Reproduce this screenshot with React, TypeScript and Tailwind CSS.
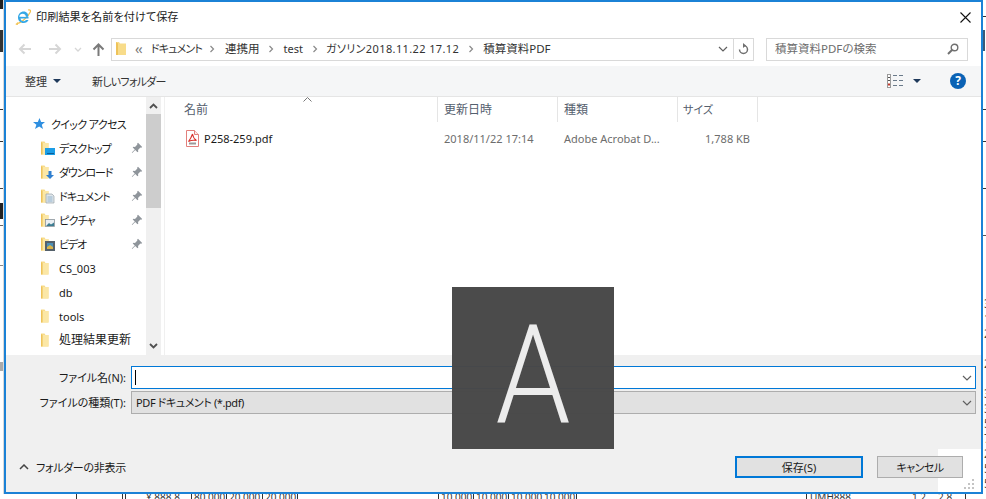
import React from "react";

const Folder = ({ className = "", children }: { className?: string; children?: React.ReactNode }) => (
  <svg width="16" height="16" viewBox="0 0 16 16" className={`shrink-0 ${className}`}>
    <path d="M1 1.500h3.500l1 1.500H8.500V14.500H1z" fill="#f8dc8a" />
    <path d="M2.500 3H8.500V14.500H2.500z" fill="#fbe7a6" />
    <path d="M1 2v12.500h1.500V3z" fill="#eec35a" />
    {children}
  </svg>
);

const Pin = () => (
  <svg width="12" height="12" viewBox="0 0 12 12" className="ml-auto mr-[3px] shrink-0">
    <path d="M7 0.800l4.200 4.200-1 .7-.8-.3L7 8l.3 1.500-.8.8L4.200 8 1.200 11l-.4-.4 3-3L1.700 5.500l.8-.8L4 5l2.400-2.400-.3-.8z" fill="#8f959b" />
  </svg>
);

const navItems: { label: string; kind: string; pin?: boolean; cls?: string }[] = [
  { label: "デスクトップ", kind: "desktop", pin: true, cls: "tracking-[-0.9px]" },
  { label: "ダウンロード", kind: "download", pin: true, cls: "tracking-[-1.1px]" },
  { label: "ドキュメント", kind: "docs", pin: true, cls: "tracking-[-0.9px]" },
  { label: "ピクチャ", kind: "pics", pin: true, cls: "tracking-[-0.75px]" },
  { label: "ビデオ", kind: "video", pin: true, cls: "tracking-[-1.2px]" },
  { label: "CS_003", kind: "" },
  { label: "db", kind: "" },
  { label: "tools", kind: "" },
  { label: "処理結果更新", kind: "", cls: "text-[12px]" },
];

const Overlay = ({ kind }: { kind: string }) => {
  if (kind === "desktop")
    return (
      <>
        <rect x="5" y="8" width="10" height="7" fill="#1b9de6" />
        <rect x="7" y="13" width="7" height="1" fill="#0c5f98" />
      </>
    );
  if (kind === "download") return <path d="M8.500 7h3v4h2.500l-4 4-4-4h2.500z" fill="#2f7fd0" />;
  if (kind === "docs")
    return (
      <>
        <path d="M6 6h6l2 2v7H6z" fill="#dfe5ea" stroke="#9aa3ab" strokeWidth=".7" />
        <path d="M7.500 9h5M7.500 11h5M7.500 13h5" stroke="#7fa8c8" strokeWidth=".8" />
      </>
    );
  if (kind === "pics")
    return (
      <>
        <rect x="5.500" y="7.500" width="9" height="7" fill="#e9eef2" stroke="#8c959c" strokeWidth=".8" />
        <path d="M6 14l3-3 2 1.500 3-2v3.500z" fill="#3d7d92" />
      </>
    );
  if (kind === "video")
    return (
      <>
        <rect x="5" y="5" width="10" height="10" fill="#54606b" />
        <rect x="7" y="7" width="6" height="6" fill="#4b8fb8" />
        <path d="M7 11l3-2 3 2v2H7z" fill="#d9b34a" />
      </>
    );
  return null;
};

const Crumb = () => (
  <svg width="6" height="8" viewBox="0 0 6 8" className="block">
    <path d="M1.500 1l3 3-3 3" fill="none" stroke="#8a8a8a" strokeWidth="1.200" />
  </svg>
);

const Chevron = ({ className = "" }: { className?: string }) => (
  <svg width="10" height="6" viewBox="0 0 10 6" className={className}>
    <path d="M1 1l4 4 4-4" fill="none" stroke="#606060" strokeWidth="1.200" />
  </svg>
);

const lines = [
  "left-0 top-[109px] w-[4px] h-px bg-[#333]",
  "left-0 top-[141px] w-[4px] h-px bg-[#333]",
  "left-0 top-[188px] w-[4px] h-px bg-[#444]",
  "left-0 top-[225px] w-[4px] h-px bg-[#666]",
  "left-0 top-[265px] w-[4px] h-px bg-[#888]",
  "left-0 top-0 w-[3px] h-[9px] bg-[#222]",
  "left-0 top-[30px] w-[3px] h-[22px] bg-[#333]",
  "left-0 top-[203px] w-[3px] h-[16px] bg-[#222]",
  "left-0 top-[362px] w-[3px] h-[9px] bg-[#aaa]",
  "left-[983px] top-[16px] w-[3px] h-px bg-[#333]",
  "left-[983px] top-[30px] w-[2px] h-[21px] bg-[#3c5a78]",
  "left-[983px] top-[109px] w-[3px] h-px bg-[#333]",
  "left-[983px] top-[141px] w-[3px] h-px bg-[#333]",
  "left-[983px] top-[188px] w-[3px] h-px bg-[#333]",
  "left-[983px] top-[235px] w-[3px] h-px bg-[#555]",
  "left-[76px] top-[490px] w-px h-[9px] bg-[#333]",
  "left-[122px] top-[490px] w-px h-[9px] bg-[#333]",
  "left-[125px] top-[490px] w-px h-[9px] bg-[#333]",
  "left-[191px] top-[490px] w-px h-[9px] bg-[#333]",
  "left-[226px] top-[490px] w-px h-[9px] bg-[#333]",
  "left-[262px] top-[490px] w-px h-[9px] bg-[#333]",
  "left-[297px] top-[490px] w-px h-[9px] bg-[#333]",
  "left-[438px] top-[490px] w-px h-[9px] bg-[#333]",
  "left-[473px] top-[490px] w-px h-[9px] bg-[#333]",
  "left-[508px] top-[490px] w-px h-[9px] bg-[#333]",
  "left-[576px] top-[490px] w-px h-[9px] bg-[#333]",
  "left-[806px] top-[490px] w-px h-[9px] bg-[#333]",
  "left-[965px] top-[490px] w-px h-[9px] bg-[#333]",
];

const peek: { t: string; c: string }[] = [
  { t: "¥ 888.8", c: "left-[146px]" },
  { t: "80,000", c: "left-[194px]" },
  { t: "20,000", c: "left-[229px]" },
  { t: "20,000", c: "left-[265px]" },
  { t: "10,000", c: "left-[441px]" },
  { t: "10,000", c: "left-[476px]" },
  { t: "10,000", c: "left-[511px]" },
  { t: "10,000", c: "left-[544px]" },
  { t: "UMH888", c: "left-[810px]" },
  { t: "1 2", c: "left-[912px]" },
  { t: "2.8", c: "left-[938px]" },
];

const rightDigits = ["3", "1", "2", "", "2", "", "3", "3", "5", "7", "2", "5", "5"];

export default function App() {
  return (
    <div className="relative w-[986px] h-[499px] overflow-hidden bg-white font-['Noto_Sans','Noto_Sans_CJK_JP',sans-serif] text-[11px] leading-none text-[#1a1a1a] [font-feature-settings:'palt']">
      {/* content behind the dialog */}
      {lines.map((c) => (
        <div key={c} className={`absolute ${c}`} />
      ))}
      {peek.map((p) => (
        <span key={p.c} className={`absolute top-[491px] text-[10px] leading-[12px] text-[#333] ${p.c}`}>
          {p.t}
        </span>
      ))}
      <div className="absolute left-[984px] top-[296px] flex flex-col text-[12px] leading-[15px] text-[#444]">
        {rightDigits.map((d, i) => (
          <span key={i} className="h-[15px]">{d}</span>
        ))}
      </div>
      <div className="absolute left-[3px] top-0 h-[494px] w-px bg-[#d8d8d8]" />

      {/* dialog */}
      <div className="relative z-10 ml-[4px] flex h-[494px] w-[979px] flex-col border-2 border-[#1b82d6] bg-white">
        {/* title bar */}
        <div className="flex h-[30px] items-center pl-[9px] pr-[10px]">
          <svg width="16" height="16" viewBox="0 0 16 16">
            <path d="M2.500 13.500C0 15.500 1 16 3 15.200" fill="none" stroke="#f2c14e" strokeWidth="1" />
            <path d="M13 1c2.500-.6 3 .6 2 2.600C13 8 6 14 2 14.500" fill="none" stroke="#f2c14e" strokeWidth="1.200" />
            <path d="M4.300 7.800h9c.2-3-1.700-5.300-4.500-5.300-3.300 0-5.800 2.700-5.800 6 0 3.200 2.400 5.500 5.600 5.500 2.300 0 4.100-1.100 4.900-3h-2.600c-.5.800-1.300 1.200-2.300 1.200-1.700 0-3-1.100-3.100-2.700h8v-1.500zm0 0c.2-1.700 1.600-3 3.400-3 1.800 0 3 1.200 3.200 3z" fill="#35a8e6" fillRule="evenodd" />
          </svg>
          <span className="ml-[5px] text-[11.200px] text-[#222]">印刷結果を名前を付けて保存</span>
          <svg width="11" height="11" viewBox="0 0 11 11" className="ml-auto">
            <path d="M.500.500l10 10M10.500.500l-10 10" stroke="#111" strokeWidth="1.100" />
          </svg>
        </div>

        {/* address row */}
        <div className="flex h-[34px] items-center">
          <svg width="14" height="12" viewBox="0 0 14 12" className="ml-[12px]">
            <path d="M13 6H2M6.500 1.500L2 6l4.500 4.500" fill="none" stroke="#d6d6d6" strokeWidth="2" />
          </svg>
          <svg width="14" height="12" viewBox="0 0 14 12" className="ml-[16px]">
            <path d="M1 6h11M7.500 1.500L12 6l-4.500 4.500" fill="none" stroke="#d6d6d6" strokeWidth="2" />
          </svg>
          <svg width="8" height="5" viewBox="0 0 8 5" className="ml-[12px]">
            <path d="M1 1l3 3 3-3" fill="none" stroke="#d6d6d6" strokeWidth="1.300" />
          </svg>
          <svg width="13" height="13" viewBox="0 0 13 13" className="ml-[10px]">
            <path d="M6.500 13V2M1.500 6.500l5-5 5 5" fill="none" stroke="#7a7a7a" strokeWidth="2" />
          </svg>
          {/* breadcrumb */}
          <div className="ml-[6px] flex h-[23px] w-[643px] items-center border border-[#d9d9d9] pb-[1px] text-[#333]">
            <svg width="11" height="13" viewBox="0 0 11 13" className="ml-[4px]">
              <path d="M0 0h3l1 1.500h6V13H0z" fill="#f8dc8a" />
              <path d="M0 0v13h2V1.500z" fill="#eec35a" />
            </svg>
            <span className="ml-[8px] text-[14px] tracking-[-1px] text-[#777]">‹‹</span>
            <span className="ml-[9px] tracking-[-0.8px]">ドキュメント</span>
            <span className="ml-[7px]"><Crumb /></span>
            <span className="ml-[10px] text-[11.500px]">連携用</span>
            <span className="ml-[8px]"><Crumb /></span>
            <span className="ml-[10px]">test</span>
            <span className="ml-[9px]"><Crumb /></span>
            <span className="ml-[8px] tracking-[0.38px]">ガソリン2018.11.22 17.12</span>
            <span className="ml-[9px]"><Crumb /></span>
            <span className="ml-[9px] text-[11.500px]">積算資料PDF</span>
            <div className="ml-auto flex h-full">
              <div className="flex w-[21px] items-center justify-center">
                <Chevron />
              </div>
              <div className="flex w-[20px] items-center justify-center border-l border-[#d9d9d9]">
                <svg width="11" height="12" viewBox="0 0 11 12">
                  <path d="M5.500 2.500a4 4 0 1 1-4 4" fill="none" stroke="#707070" strokeWidth="1.500" />
                  <path d="M5 0v5l3-2.500z" fill="#707070" />
                </svg>
              </div>
            </div>
          </div>
          {/* search */}
          <div className="ml-[12px] flex h-[23px] w-[202px] items-center border border-[#d9d9d9] pl-[8px] pr-[8px] pb-[1px] text-[11.500px] text-[#6d6d6d]">
            <span>積算資料PDFの検索</span>
            <svg width="12" height="12" viewBox="0 0 12 12" className="ml-auto">
              <circle cx="7.500" cy="4.500" r="3.300" fill="none" stroke="#707070" strokeWidth="1.400" />
              <path d="M5 7l-4 4" stroke="#707070" strokeWidth="2" />
            </svg>
          </div>
        </div>

        {/* toolbar */}
        <div className="flex h-[31px] items-center border-b border-[#e5e5e5] bg-[#f5f6f7] text-[#1e395b]">
          <span className="ml-[19px] text-[#333]">整理</span>
          <svg width="8" height="4" viewBox="0 0 8 4" className="ml-[6px]">
            <path d="M0 0h8L4 4z" fill="#1e395b" />
          </svg>
          <span className="ml-[31px] tracking-[-0.75px] text-[#333]">新しいフォルダー</span>
          <svg width="17" height="14" viewBox="0 0 17 14" className="ml-auto">
            <rect x=".500" y=".500" width="3" height="13" fill="#fff" stroke="#9a9a9a" />
            <path d="M1 3.500h2M1 6.500h2" stroke="#555" />
            <rect x="1" y="9.500" width="2" height="2" fill="#c0392b" />
            <path d="M6 1.500h4M12 1.500h4M6 6.500h4M12 6.500h4M6 11.500h4M12 11.500h4" stroke="#6a7a8a" />
          </svg>
          <svg width="8" height="4" viewBox="0 0 8 4" className="ml-[9px]">
            <path d="M0 0h8L4 4z" fill="#1e395b" />
          </svg>
          <div className="ml-[29px] mr-[15px] flex h-[16px] w-[16px] items-center justify-center rounded-full bg-[#0a62b5] text-[12px] font-bold text-white">
            ?
          </div>
        </div>

        {/* main */}
        <div className="flex h-[258px]">
          {/* navigation */}
          <div className="flex w-[140px] flex-col overflow-hidden pt-[15px]">
            <div className="flex h-[24px] shrink-0 items-center pl-[27px]">
              <svg width="12" height="12" viewBox="0 0 12 12">
                <path d="M6.500 0l1.600 4H12L8.800 6.700 10 11 6.200 8.500 2 11l1.400-4.300L0 4h4.800z" fill="#2f8fe0" />
              </svg>
              <span className="ml-[6px] tracking-[-0.65px]">クイック アクセス</span>
            </div>
            {navItems.map((n) => (
              <div key={n.label} className="flex h-[24px] shrink-0 items-center pl-[34px]">
                <Folder>
                  <Overlay kind={n.kind} />
                </Folder>
                <span className={`ml-[3px] ${n.cls ?? ""}`}>{n.label}</span>
                {n.pin && <Pin />}
              </div>
            ))}
          </div>
          {/* nav scrollbar */}
          <div className="flex w-[15px] flex-col bg-[#f0f0f0]">
            <div className="flex h-[17px] items-center justify-center">
              <svg width="9" height="6" viewBox="0 0 9 6">
                <path d="M1 5l3.500-3.500L8 5" fill="none" stroke="#505050" strokeWidth="1.800" />
              </svg>
            </div>
            <div className="h-[94px] bg-[#cdcdcd]" />
            <div className="flex flex-1 items-end justify-center pb-[6px]">
              <svg width="9" height="6" viewBox="0 0 9 6">
                <path d="M1 1l3.500 3.500L8 1" fill="none" stroke="#505050" strokeWidth="1.800" />
              </svg>
            </div>
          </div>
          {/* file list */}
          <div className="ml-[3px] flex-1 border-l border-[#f0f0f0] text-[#6d6d6d]">
            <div className="relative flex h-[25px]">
              <svg width="9" height="5" viewBox="0 0 9 5" className="absolute left-[138px] top-0">
                <path d="M.500 4.500l4-4 4 4" fill="none" stroke="#777" />
              </svg>
              <div className="flex w-[273px] items-center border-r border-[#e5e5e5] pl-[19px] text-[12px] text-[#55606e]">名前</div>
              <div className="flex w-[120px] items-center border-r border-[#e5e5e5] pl-[6px] text-[12px] text-[#55606e]">更新日時</div>
              <div className="flex w-[120px] items-center border-r border-[#e5e5e5] pl-[6px] text-[12px] text-[#55606e]">種類</div>
              <div className="flex w-[80px] items-center border-r border-[#e5e5e5] pl-[5px] text-[#55606e]">サイズ</div>
            </div>
            <div className="mt-[7px] flex h-[18px] items-center">
              <svg width="13" height="17" viewBox="0 0 13 17" className="ml-[21px]">
                <path d="M.500.500h8l4 4v12H.500z" fill="#fff" stroke="#e2807c" />
                <path d="M8.500.500v4h4" fill="#fde8e6" stroke="#e2807c" />
                <path d="M6.500 4c-1 3-2 5-4 7.500 3-1.500 5-1.500 8-1-2.500-1.500-3.500-3.500-4-6.500z" fill="none" stroke="#d9322c" strokeWidth="1.100" />
                <rect x="3" y="12.500" width="7" height="2" fill="#9a9a9a" />
              </svg>
              <span className="ml-[5px] w-[240px] text-[#1a1a1a]">P258-259.pdf</span>
              <span className="w-[120px]">2018/11/22 17:14</span>
              <span className="w-[120px]">Adobe Acrobat D...</span>
              <span className="w-[66px] text-right">1,788 KB</span>
            </div>
          </div>
        </div>

        {/* lower pane */}
        <div className="flex flex-1 flex-col bg-[#f0f0f0] pt-[11px]">
          <div className="flex h-[23px] items-center">
            <span className="w-[120px] text-right">ファイル名(N):</span>
            <div className="ml-[5px] flex h-[23px] w-[845px] items-center border border-[#0078d7] bg-white pl-[3px] pr-[3px]">
              <div className="h-[15px] w-px bg-black" />
              <Chevron className="ml-auto" />
            </div>
          </div>
          <div className="mt-[2px] flex h-[23px] items-center">
            <span className="w-[120px] text-right">ファイルの種類(T):</span>
            <div className="ml-[5px] flex h-[23px] w-[845px] items-center border border-[#adadad] bg-[#e1e1e1] pl-[4px] pr-[3px]">
              <span className="tracking-[-0.4px]">PDF ドキュメント (*.pdf)</span>
              <Chevron className="ml-auto" />
            </div>
          </div>
          <div className="relative mt-[42px] flex h-[22px] items-center">
            <svg width="10" height="6" viewBox="0 0 10 6" className="ml-[13px]">
              <path d="M1 5l4-4 4 4" fill="none" stroke="#444" strokeWidth="1.500" />
            </svg>
            <span className="ml-[7px] tracking-[-0.3px]">フォルダーの非表示</span>
            <div className="absolute left-[932px] top-[-7px] h-[43px] w-[43px] bg-white" />
            <div className="relative ml-auto flex h-[22px] w-[128px] items-center justify-center border-2 border-[#0078d7] bg-[#e1e1e1]">
              保存(S)
            </div>
            <div className="relative ml-[14px] mr-[18px] flex h-[22px] w-[86px] items-center justify-center border border-[#adadad] bg-[#e1e1e1] tracking-[-0.5px]">
              キャンセル
            </div>
            <svg width="12" height="12" viewBox="0 0 12 12" className="absolute left-[957px] top-[23px]">
              <path d="M9 0h2v2H9zM5 4h2v2H5zM9 4h2v2H9zM1 8h2v2H1zM5 8h2v2H5zM9 8h2v2H9z" fill="#c4c4c4" />
            </svg>
          </div>
        </div>
      </div>

      {/* watermark */}
      <div className="absolute left-[452px] top-[287px] z-20 flex h-[162px] w-[162px] items-center justify-center bg-[#474747]/[.98] pt-[13px] font-['Roboto',sans-serif] text-[138px] font-light leading-none text-[#ececec]">
        <span className="inline-block scale-x-[.87]">A</span>
      </div>
    </div>
  );
}
